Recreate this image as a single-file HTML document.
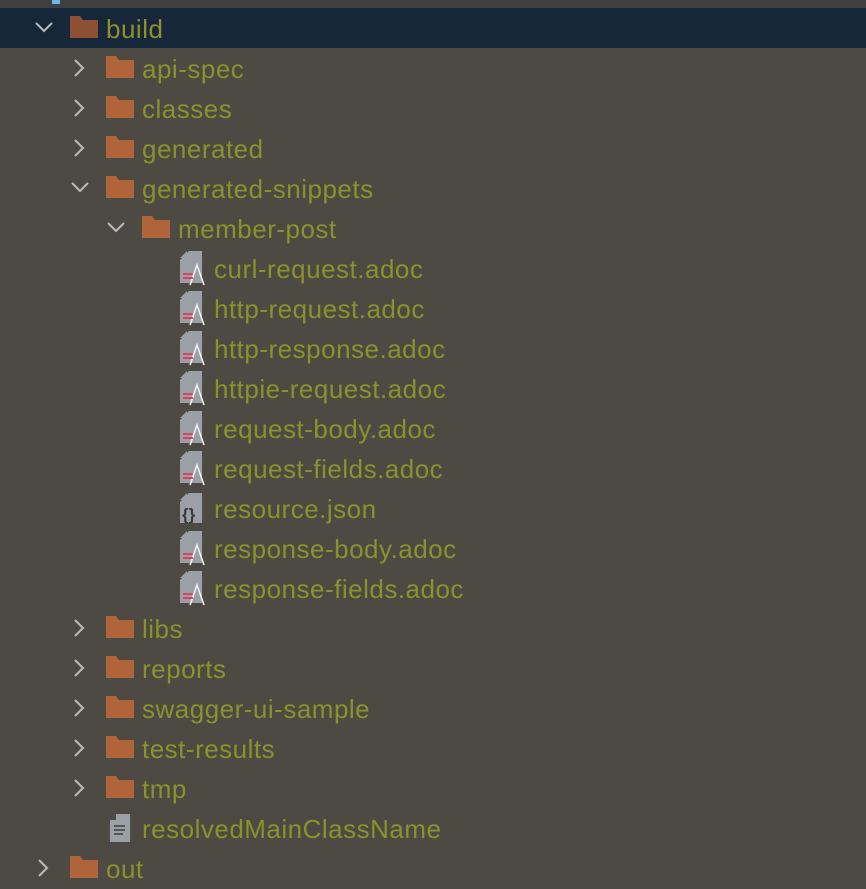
<!DOCTYPE html>
<html><head><style>
body{margin:0;width:866px;height:888px;background:#4c4a43;overflow:hidden;position:relative;font-family:"Liberation Sans",Helvetica,sans-serif;}
.top{position:absolute;left:0;top:0;width:866px;height:8px;background:#3f3f3f}
.sel{position:absolute;left:0;top:8px;width:866px;height:40px;background:#17273a}
.row{position:absolute;height:40px;line-height:40px;font-size:26px;letter-spacing:0.5px;color:#8d912c;white-space:nowrap}
svg{position:absolute}
</style></head><body>
<div class="top"><div style="position:absolute;left:52px;top:0;width:8px;height:4px;background:#6cb8e6"></div></div>
<div class="sel"></div>
<div id="c"></div>
<script>
const rows=[
[0,'d','f','build'],[1,'r','f','api-spec'],[1,'r','f','classes'],[1,'r','f','generated'],[1,'d','f','generated-snippets'],
[2,'d','f','member-post'],[3,'','a','curl-request.adoc'],[3,'','a','http-request.adoc'],[3,'','a','http-response.adoc'],
[3,'','a','httpie-request.adoc'],[3,'','a','request-body.adoc'],[3,'','a','request-fields.adoc'],[3,'','j','resource.json'],
[3,'','a','response-body.adoc'],[3,'','a','response-fields.adoc'],[1,'r','f','libs'],[1,'r','f','reports'],[1,'r','f','swagger-ui-sample'],
[1,'r','f','test-results'],[1,'r','f','tmp'],[1,'','t','resolvedMainClassName'],[0,'r','f','out']];
let h='';
rows.forEach((r,i)=>{
 const cy=28+40*i, ix=70+36*r[0], col=i==0?'#8e5035':'#b0643a';
 if(r[1]=='d') h+=`<svg style="left:${ix-36}px;top:${cy-8}px" width="20" height="14"><path d="M2 3 L10 11 L18 3" fill="none" stroke="#b9bcbf" stroke-width="2"/></svg>`;
 if(r[1]=='r') h+=`<svg style="left:${ix-34}px;top:${cy-10}px" width="14" height="20"><path d="M3 2 L11 10 L3 18" fill="none" stroke="#b9bcbf" stroke-width="2"/></svg>`;
 if(r[2]=='f') h+=`<svg style="left:${ix}px;top:${cy-12}px" width="28" height="23"><path d="M0 0 H10 L13 4 H28 V22 H0 Z" fill="${col}"/></svg>`;
 if(r[2]=='a') h+=`<svg style="left:${ix+2}px;top:${cy-17}px" width="26" height="36"><path d="M9 0 H22 V32 H0 V9 Z" fill="#9aa0a6"/><path d="M0 7 L7 0 V7 Z" fill="#9aa0a6"/><path d="M10 34 L17 14 L24 34" fill="none" stroke="#f2f2f2" stroke-width="1.6"/><path d="M3 23 H13 M3 27 H13" stroke="#e0385a" stroke-width="1.8"/></svg>`;
 if(r[2]=='j') h+=`<svg style="left:${ix+2}px;top:${cy-15}px" width="26" height="32"><path d="M9 0 H22 V30 H0 V9 Z" fill="#9aa0a6"/><path d="M0 7 L7 0 V7 Z" fill="#9aa0a6"/><text x="2" y="27" font-size="17" font-weight="bold" fill="#3a3a3a" font-family="Liberation Sans">{}</text></svg>`;
 if(r[2]=='t') h+=`<svg style="left:${ix+4}px;top:${cy-14}px" width="22" height="30"><path d="M6 0 H20 V28 H0 V6 Z" fill="#9aa0a6"/><path d="M0 6 L6 0 V6 Z" fill="#4c4a43"/><path d="M4 12 H15 M4 16 H15 M4 20 H13" stroke="#3c3f41" stroke-width="1.6"/></svg>`;
 const tx=r[2]=='t'?142:ix+36;
 h+=`<div class="row" style="left:${tx}px;top:${cy-19}px">${r[3]}</div>`;
});
document.getElementById('c').innerHTML=h;
</script>
</body></html>
